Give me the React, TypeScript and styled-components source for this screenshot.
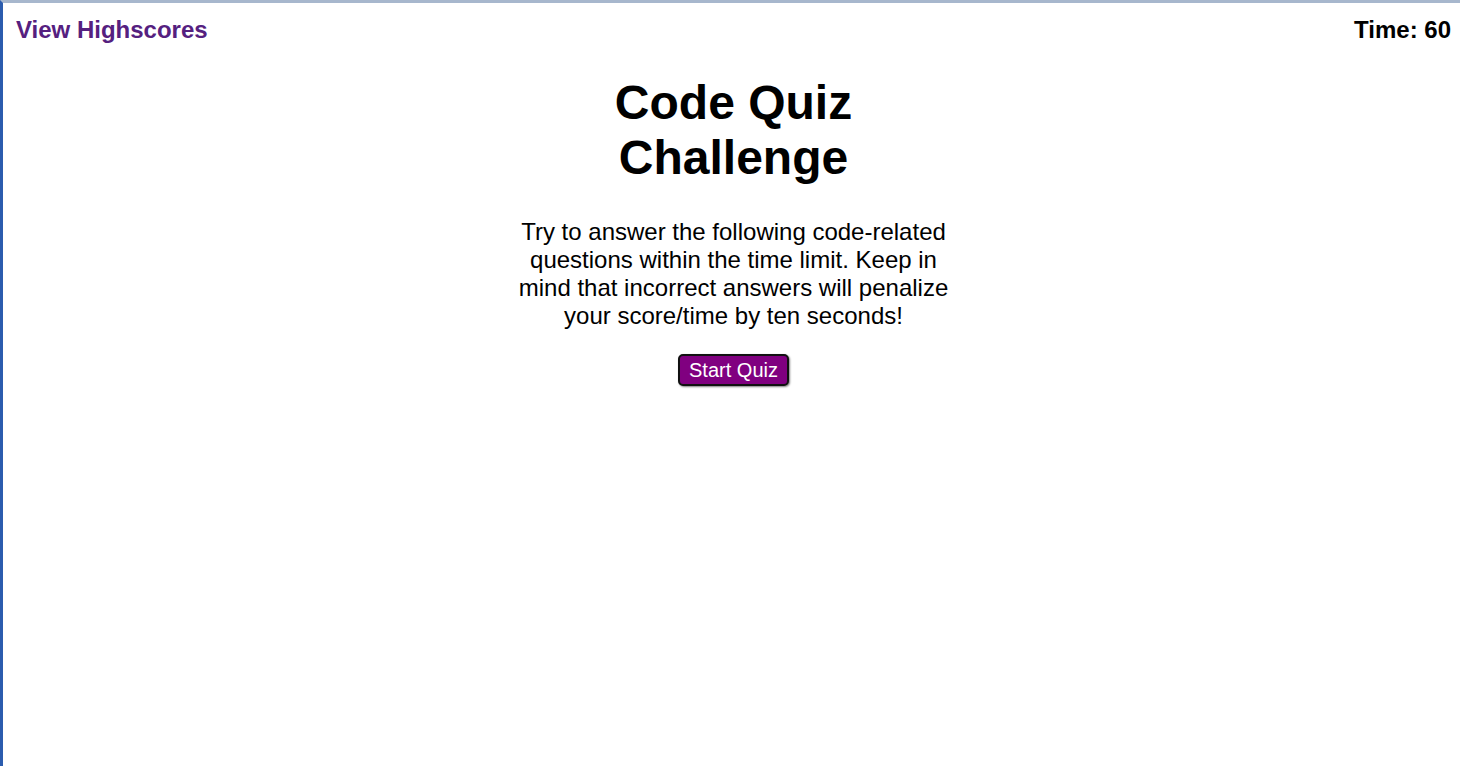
import React from 'react';
import styled, { createGlobalStyle } from 'styled-components';

const GlobalStyle = createGlobalStyle`
  html, body {
    margin: 0;
    padding: 0;
    background: #ffffff;
  }
  body {
    font-family: "Liberation Sans", Arial, sans-serif;
  }
`;

const Frame = styled.div`
  box-sizing: border-box;
  min-height: 766px;
  border-top: 3px solid #a7b7cd;
  border-left: 3px solid #2b5cae;
  background: #ffffff;
`;

const Header = styled.header`
  display: flex;
  justify-content: space-between;
  align-items: center;
  padding: 13px 9px 0 13px;
  font-size: 24px;
  font-weight: bold;
`;

const HighscoreLink = styled.a`
  color: #55207f;
  text-decoration: none;
  cursor: pointer;
`;

const Timer = styled.span`
  color: #000000;
`;

const Main = styled.main`
  width: 440px;
  margin: 0 auto;
  padding-left: 4px;
  display: flex;
  flex-direction: column;
  align-items: center;
  text-align: center;
`;

const Title = styled.h1`
  font-size: 48px;
  font-weight: bold;
  margin: 31px 0 0;
  color: #000000;
`;

const Intro = styled.p`
  font-size: 24px;
  line-height: 28px;
  margin: 33px 0 0;
  color: #000000;
`;

const StartButton = styled.button`
  margin-top: 24px;
  background: #800080;
  color: #ffffff;
  font-family: "Liberation Sans", Arial, sans-serif;
  font-size: 20px;
  padding: 3px 9px 2px;
  border: 2px solid #111111;
  border-radius: 5px;
  box-shadow: 1px 1px 2px rgba(0, 0, 0, 0.5);
  cursor: pointer;
`;

export default function App() {
  return (
    <>
      <GlobalStyle />
      <Frame>
        <Header>
          <HighscoreLink>View Highscores</HighscoreLink>
          <Timer>Time: 60</Timer>
        </Header>
        <Main>
          <Title>Code Quiz Challenge</Title>
          <Intro>
            Try to answer the following code-related questions within the time limit. Keep in mind
            that incorrect answers will penalize your score/time by ten seconds!
          </Intro>
          <StartButton>Start Quiz</StartButton>
        </Main>
      </Frame>
    </>
  );
}
